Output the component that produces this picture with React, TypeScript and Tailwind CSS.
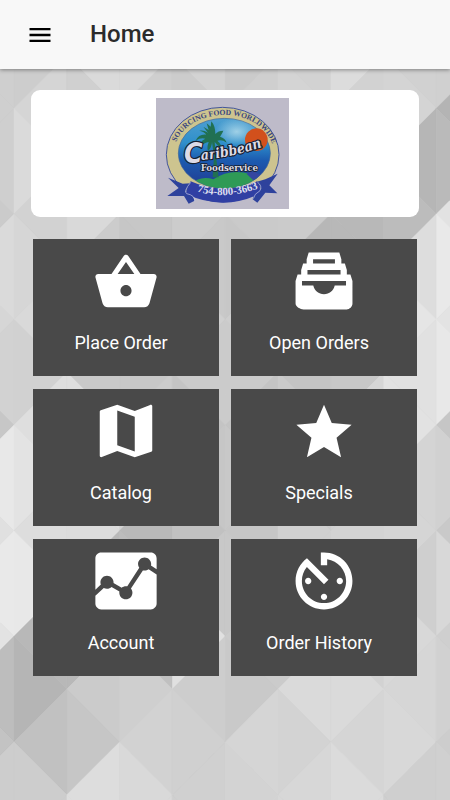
import React from "react";
import type { IconType } from "react-icons";
import {
  IoMdMenu,
  IoMdBasket,
  IoMdFiling,
  IoMdMap,
  IoMdStar,
  IoMdAnalytics,
  IoMdTimer,
} from "react-icons/io";

type Tile = {
  label: string;
  icon: IconType;
};

const tiles: Tile[] = [
  { label: "Place Order", icon: IoMdBasket },
  { label: "Open Orders", icon: IoMdFiling },
  { label: "Catalog", icon: IoMdMap },
  { label: "Specials", icon: IoMdStar },
  { label: "Account", icon: IoMdAnalytics },
  { label: "Order History", icon: IoMdTimer },
];

// grey level of every triangle, one row per vertical strip, top to bottom
const shades = [
  "cf cf cf cb da d6 d2 c7 e8 e0 e9 e3 bd c3 cd cd",
  "cd d5 da d2 d6 d9 d1 de e3 dd e8 b8 b5 c1 cd cd",
  "da d0 d6 d9 cc cc c9 de dd dc b9 b8 cb c6 dd dd",
  "da cf cc c7 c6 c6 c8 cc d2 b9 bc c0 cf d2 d9 d9",
  "d3 cc cc cc c9 d0 cb c4 c6 c1 c8 e0 cd d0 d0 cf",
  "cb cf cc ca c7 ce cb c4 c8 c6 c8 cb c9 d5 d3 d3",
  "d2 d4 cc cb b7 bc c4 ca cc d0 d0 cb da d3 d7 d7",
  "dc d2 cc b8 b8 c0 c8 d6 d2 d3 d3 d2 da d5 db db",
  "d1 d4 b6 bc dd e5 e1 e2 d4 d5 cf d8 d6 d8 cf cf",
  "d0 b4 ba e2 e9 e3 e8 c6 d1 c9 d8 cf d1 cd d0 d0",
].map((row) => row.split(" "));

const STEP = 52.8;

const Background: React.FC = () => (
  <svg
    aria-hidden="true"
    viewBox="0 0 450 800"
    preserveAspectRatio="xMidYMin slice"
    className="absolute inset-0 h-full w-full"
  >
    <rect width="450" height="800" fill="#cfcfcf" />
    {shades.map((row, s) =>
      row.map((shade, k) => {
        const left = 14 + (s - 1) * STEP;
        const right = left + STEP;
        const y = 55.5 + k * STEP;
        const apexRight = (s + k) % 2 === 1;
        const apex = apexRight ? right : left;
        const base = apexRight ? left : right;
        return (
          <polygon
            key={`${s}-${k}`}
            points={`${base},${y - STEP} ${base},${y + STEP} ${apex},${y}`}
            fill={`#${shade}${shade}${shade}`}
            stroke={`#${shade}${shade}${shade}`}
            strokeWidth="0.4"
          />
        );
      })
    )}
  </svg>
);

const Logo: React.FC = () => (
  <svg
    viewBox="18 24 399 333"
    className="h-[111px] w-[133px]"
    role="img"
    aria-label="Caribbean Foodservice"
  >
    <defs>
      <linearGradient id="sea" x1="0" y1="0" x2="0" y2="1">
        <stop offset="0" stopColor="#4e9fd0" />
        <stop offset="0.35" stopColor="#2f8fcb" />
        <stop offset="0.6" stopColor="#1c5bb0" />
        <stop offset="1" stopColor="#22398f" />
      </linearGradient>
      <radialGradient id="glow">
        <stop offset="0" stopColor="#9fd0e6" />
        <stop offset="1" stopColor="#9fd0e6" stopOpacity="0" />
      </radialGradient>
      <clipPath id="inner">
        <ellipse cx="223" cy="190" rx="138" ry="105" />
      </clipPath>
      <path id="arc" d="M72 176 C100 44 344 36 372 182" />
      <path id="name" d="M154 210 Q246 202 346 168" />
      <path id="phone" d="M130 301 Q228 334 336 291" />
    </defs>
    <rect x="18" y="24" width="399" height="333" fill="#bebbc9" />
    <ellipse cx="218" cy="194" rx="169" ry="142" fill="#cdc48f" stroke="#42559c" strokeWidth="3" />
    <ellipse cx="223" cy="190" rx="138" ry="105" fill="url(#sea)" stroke="#3f6398" strokeWidth="2" />
    <g clipPath="url(#inner)">
      <ellipse cx="260" cy="125" rx="65" ry="42" fill="url(#glow)" />
      <path d="M120 285 Q150 255 190 268 Q240 235 300 252 Q330 262 345 290 L240 310Z" fill="#2f9a56" />
      <path d="M290 252 Q305 236 322 250 L345 258 L320 280Z" fill="#3446a0" />
    </g>
    <circle cx="319" cy="149" r="34" fill="#d2501c" />
    <path
      d="M184 142 Q172 118 148 122 Q166 126 168 134 Q146 132 137 152 Q152 142 166 146 Q146 156 148 174 Q164 156 176 156 Q170 172 174 184 Q186 170 186 156 L192 200 L188 262 L206 262 L198 200 L194 156 Q204 168 216 180 Q216 164 202 152 Q216 148 230 158 Q226 144 210 140 Q218 128 220 122 Q204 122 196 132 Q196 108 184 94 L182 110 L170 100 L176 120 L160 110 Z"
      fill="#217052"
    />
    <path d="M54 263 L98 281 L122 280 L106 304 L128 318 L134 332 L116 341 L102 318 L52 318 L86 294Z" fill="#2e429c" />
    <path d="M383 251 L346 268 L318 276 L332 296 L312 312 L308 328 L322 338 L346 308 L382 310 L358 286Z" fill="#2e429c" />
    <path d="M122 274 Q220 318 322 274 Q334 288 328 312 Q220 364 108 312 Q108 296 122 274Z" fill="#303fa3" />
    <path
      d="M122 277 Q100 304 110 311 Q136 316 134 334 M322 276 Q338 288 330 302 Q312 312 310 326"
      fill="none"
      stroke="#c9cbe3"
      strokeWidth="2"
    />
    <text fontFamily="'Liberation Serif', serif" fontWeight="700" fontSize="23" fill="#39447f">
      <textPath href="#arc" startOffset="50%" textAnchor="middle">
        SOURCING FOOD WORLDWIDE
      </textPath>
    </text>
    <g
      fontFamily="'DejaVu Serif Condensed', 'DejaVu Serif', serif"
      fontWeight="700"
      fill="#dcdae6"
      stroke="#17202f"
      strokeWidth="7"
      paintOrder="stroke"
      strokeLinejoin="round"
    >
      <text x="102" y="218" fontSize="84" fontStyle="italic" fontFamily="'DejaVu Sans Condensed', sans-serif">
        C
      </text>
      <text fontSize="42" fontStyle="italic">
        <textPath href="#name">aribbean</textPath>
      </text>
      <text x="152" y="244" fontSize="29" strokeWidth="5">
        Foodservice
      </text>
    </g>
    <text fontFamily="'Liberation Serif', serif" fontWeight="700" fontSize="33" fill="#dcdcee">
      <textPath href="#phone" startOffset="50%" textAnchor="middle">
        754-800-3663
      </textPath>
    </text>
  </svg>
);

const App: React.FC = () => {
  return (
    <div className="relative flex min-h-screen flex-col overflow-hidden bg-[#cfcfcf] font-['Roboto',sans-serif]">
      <Background />
      <header className="relative flex items-center gap-9 bg-[#f8f8f8] py-5 pl-[26px] shadow-[0_1px_4px_rgba(0,0,0,0.4)]">
        <button type="button" aria-label="Menu" className="text-black">
          <IoMdMenu className="size-7" />
        </button>
        <h1 className="text-2xl leading-[29px] font-medium text-[#2b2b2b]">Home</h1>
      </header>
      <main className="relative pt-[21px]">
        <div className="mx-[31px] flex justify-center rounded-[9px] bg-white py-2 pr-1.5">
          <Logo />
        </div>
        <div className="mx-[33px] mt-[22px] grid grid-cols-2 gap-x-3 gap-y-[13px]">
          {tiles.map(({ label, icon: Icon }) => (
            <button
              key={label}
              type="button"
              className="flex flex-col items-center bg-[#494949] pt-[7px] pb-[21px] text-white"
            >
              <Icon className="size-[70px]" />
              <span className="mt-[15px] pr-[10px] text-lg leading-6">{label}</span>
            </button>
          ))}
        </div>
      </main>
    </div>
  );
};

export default App;
